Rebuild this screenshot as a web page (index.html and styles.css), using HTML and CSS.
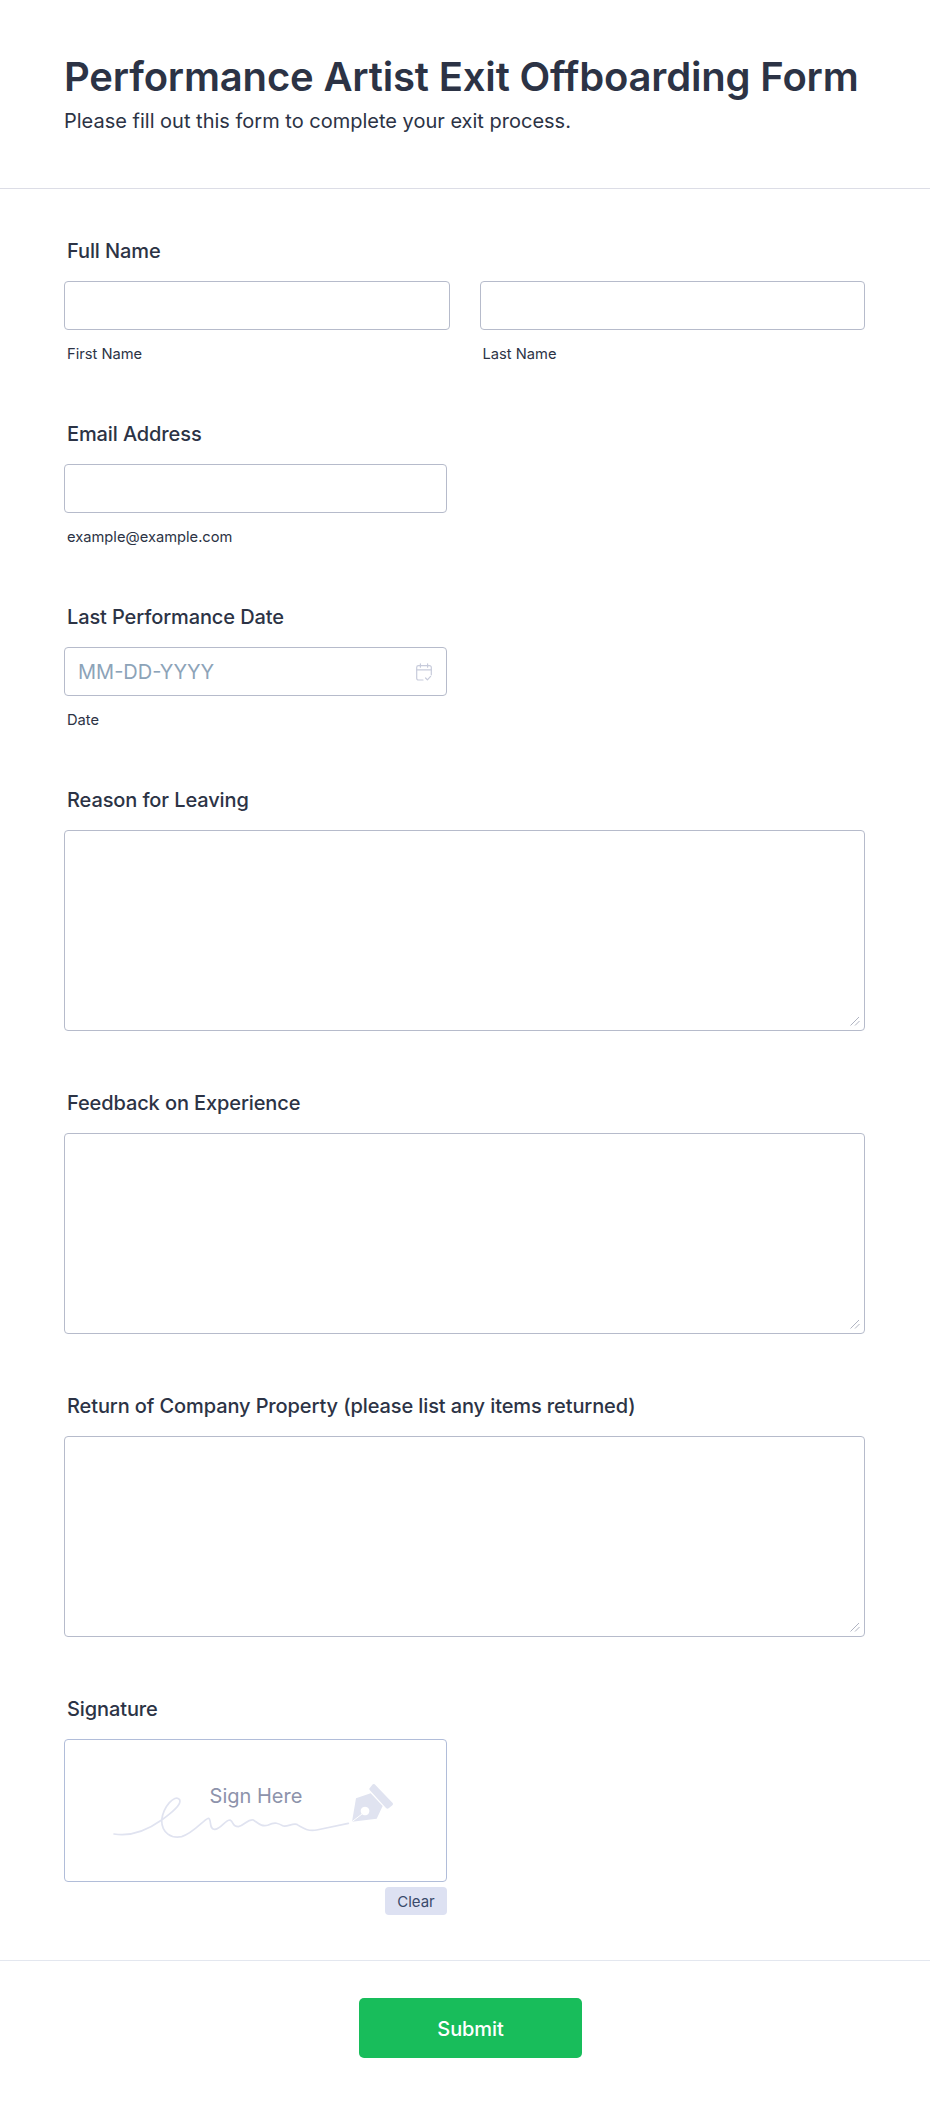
FILE: index.html
```html
<!DOCTYPE html>
<html lang="en">
<head>
<meta charset="utf-8">
<title>Performance Artist Exit Offboarding Form</title>
<link rel="stylesheet" href="styles.css">
</head>
<body>
<form class="form">
  <header class="header">
    <h1 class="title">Performance Artist Exit Offboarding Form</h1>
    <p class="subtitle">Please fill out this form to complete your exit process.</p>
  </header>
  <div class="fields">
    <div class="field">
      <label class="label">Full Name</label>
      <div class="name-row">
        <div class="name-col">
          <input class="input input-full" type="text">
          <span class="sublabel">First Name</span>
        </div>
        <div class="name-col">
          <input class="input input-full" type="text">
          <span class="sublabel">Last Name</span>
        </div>
      </div>
    </div>
    <div class="field">
      <label class="label">Email Address</label>
      <input class="input input-half" type="email">
      <span class="sublabel">example@example.com</span>
    </div>
    <div class="field">
      <label class="label">Last Performance Date</label>
      <div class="date-wrap">
        <input class="input input-full date-input" type="text" placeholder="MM-DD-YYYY">
        <svg class="calendar" viewBox="0 0 16 18" fill="none" stroke="#c7cbdb" stroke-width="1.2" stroke-linecap="round" stroke-linejoin="round">
          <path d="M7 17H2.5A1.8 1.8 0 0 1 .7 15.2V4.4a1.8 1.8 0 0 1 1.8-1.8h11a1.8 1.8 0 0 1 1.8 1.8v7.4"/>
          <path d="M.7 6.8h14.6M4.4.8v3.4M11.6.8v3.4"/>
          <path d="M9.6 15l1.8 1.8 3.2-3.4"/>
        </svg>
      </div>
      <span class="sublabel">Date</span>
    </div>
    <div class="field field-long">
      <label class="label">Reason for Leaving</label>
      <div class="textarea-wrap">
        <textarea class="textarea"></textarea>
        <svg class="grip" viewBox="0 0 10 10" fill="none" stroke="#b0b4c2" stroke-width="1"><path d="M0.5 9.5L9 1M5 9.5L9.5 5"/></svg>
      </div>
    </div>
    <div class="field field-long">
      <label class="label">Feedback on Experience</label>
      <div class="textarea-wrap">
        <textarea class="textarea"></textarea>
        <svg class="grip" viewBox="0 0 10 10" fill="none" stroke="#b0b4c2" stroke-width="1"><path d="M0.5 9.5L9 1M5 9.5L9.5 5"/></svg>
      </div>
    </div>
    <div class="field field-long">
      <label class="label">Return of Company Property (please list any items returned)</label>
      <div class="textarea-wrap">
        <textarea class="textarea"></textarea>
        <svg class="grip" viewBox="0 0 10 10" fill="none" stroke="#b0b4c2" stroke-width="1"><path d="M0.5 9.5L9 1M5 9.5L9.5 5"/></svg>
      </div>
    </div>
    <div class="field field-signature">
      <label class="label">Signature</label>
      <div class="signature-pad">
        <svg class="signature-art" viewBox="0 0 930 270" fill="none">
          <path d="M42 192C90 200 140 182 185 150C215 128 248 102 238 88C224 72 190 110 185 150C185 190 215 206 245 200C280 190 310 150 325 145C336 145 325 180 345 178C365 175 375 150 390 150C402 155 395 170 415 170C435 165 445 145 460 150C475 160 485 172 505 165C525 155 535 160 550 168C565 170 575 160 590 163C610 175 625 185 650 180L745 160" stroke="#e0e3f0" stroke-width="5" stroke-linecap="round" stroke-linejoin="round"/>
          <path fill-rule="evenodd" fill="#e0e3f0" d="M768 85L812 70L848 108L830 146L756 155ZM795 110a13 13 0 1 0 .1 0Z"/>
          <path d="M786 132L756 155" stroke="#fff" stroke-width="3"/>
          <path fill="#e0e3f0" d="M824 43L878 99Q881 103 877 106L866 115Q862 118 858 114L809 60Q806 56 810 53L817 44Q820 40 824 43Z"/>
        </svg>
        <span class="sign-here">Sign Here</span>
      </div>
      <div class="signature-actions">
        <button class="clear" type="button">Clear</button>
      </div>
    </div>
  </div>
  <footer class="footer">
    <button class="submit" type="button">Submit</button>
  </footer>
</form>
</body>
</html>
```
FILE: styles.css
```css
* {
  box-sizing: border-box;
}
html, body {
  margin: 0;
  padding: 0;
  background: #fff;
}
body {
  font-family: Inter, "Liberation Sans", sans-serif;
  color: #2c3345;
}
.form {
  width: 930px;
  height: 2107px;
  overflow: hidden;
}
.header {
  height: 189px;
  padding: 52px 64px 0;
  border-bottom: 1px solid #dcdde6;
}
.title {
  margin: 0;
  font-size: 40px;
  line-height: 50px;
  font-weight: 600;
  letter-spacing: -0.17px;
  color: #2c3345;
  white-space: nowrap;
}
.subtitle {
  margin: 5px 0 0;
  font-size: 20px;
  line-height: 28px;
  font-weight: 400;
  color: #2c3345;
}
.fields {
  padding: 50px 64px 0;
}
.field {
  display: flex;
  flex-direction: column;
  align-items: flex-start;
  height: 183px;
}
.field-long {
  height: 303px;
}
.field-signature {
  height: 263px;
}
.label {
  margin: 0 0 18px 3px;
  font-size: 20px;
  line-height: 24px;
  font-weight: 500;
  letter-spacing: -0.11px;
  color: #2c3345;
}
.name-row {
  display: flex;
  gap: 30px;
  width: 801px;
}
.name-col {
  flex: 1;
  display: flex;
  flex-direction: column;
}
.input {
  height: 49px;
  border: 1px solid #b6bbcb;
  border-radius: 4px;
  background: #fff;
  display: block;
  padding: 0 13px;
  font-family: inherit;
  font-size: 20px;
  color: #2c3345;
  outline: none;
}
.input-full {
  width: 100%;
}
.input-half {
  width: 383px;
}
.date-wrap {
  position: relative;
  width: 383px;
}
.date-input::placeholder {
  color: #8ca3b8;
  opacity: 1;
}
.calendar {
  position: absolute;
  top: 16px;
  right: 15px;
  width: 16px;
  height: 18px;
}
.sublabel {
  display: block;
  margin: 15px 0 0 3px;
  font-size: 14.7px;
  line-height: 19px;
  color: #2c3345;
}
.textarea-wrap {
  position: relative;
  width: 801px;
  height: 201px;
}
.textarea {
  display: block;
  width: 100%;
  height: 100%;
  border: 1px solid #b6bbcb;
  border-radius: 4px;
  background: #fff;
  outline: none;
  resize: none;
}
.grip {
  position: absolute;
  right: 5px;
  bottom: 5px;
  width: 10px;
  height: 10px;
}
.signature-pad {
  position: relative;
  width: 383px;
  height: 143px;
  border: 1px solid #b1bdd9;
  border-radius: 4px;
  background: #fff;
}
.signature-art {
  position: absolute;
  left: 35px;
  top: 30px;
  width: 310px;
  height: 90px;
}
.sign-here {
  position: absolute;
  left: 1px;
  right: 0;
  top: 44px;
  text-align: center;
  font-size: 20px;
  line-height: 24px;
  color: #8d93ab;
}
.signature-actions {
  display: flex;
  justify-content: flex-end;
  width: 383px;
  margin-top: 5px;
}
.clear {
  width: 62px;
  height: 28px;
  padding: 0;
  border: 0;
  border-radius: 4px;
  background: #dde1f2;
  color: #3a4a6b;
  font-family: inherit;
  font-size: 15px;
}
.footer {
  display: flex;
  justify-content: center;
  padding-top: 37px;
  border-top: 1px solid #e3e7ef;
}
.submit {
  width: 223px;
  height: 60px;
  margin-left: 11px;
  padding: 2px 0 0;
  border: 0;
  border-radius: 5px;
  background: #18bd5b;
  color: #fff;
  font-family: inherit;
  font-size: 20px;
  font-weight: 500;
  letter-spacing: -0.1px;
}
```
